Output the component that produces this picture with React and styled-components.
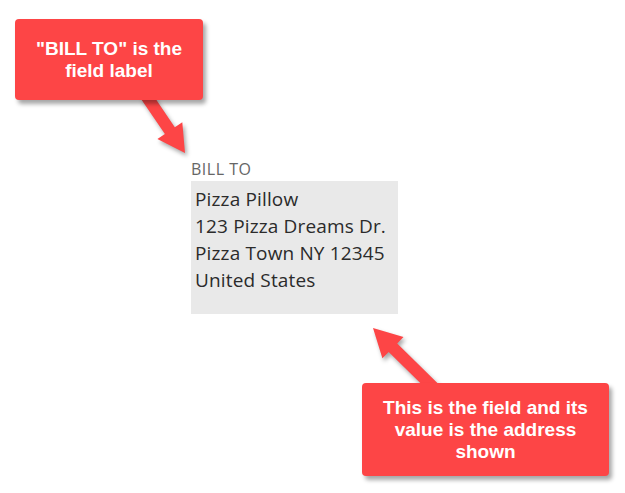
import React from "react";
import styled, { createGlobalStyle } from "styled-components";

const GlobalStyle = createGlobalStyle`
  html, body {
    margin: 0;
    padding: 0;
    background: #ffffff;
  }
`;

const RED = "#fd4546";

const Canvas = styled.div`
  position: relative;
  width: 625px;
  height: 493px;
  overflow: hidden;
  background: #ffffff;
  padding: 158px 0 0 191px;
  box-sizing: border-box;
`;

const Field = styled.div`
  display: flex;
  flex-direction: column;
  width: 207px;
  font-family: "Open Sans", "Liberation Sans", sans-serif;
`;

const FieldLabel = styled.div`
  font-size: 16px;
  line-height: 23px;
  color: #666666;
  letter-spacing: 0.5px;
`;

const FieldValue = styled.div`
  background: #e9e9e9;
  height: 133px;
  box-sizing: border-box;
  padding: 5px 4px;
  font-size: 19px;
  line-height: 27px;
  letter-spacing: 0.15px;
  color: #2b2b2b;
  white-space: pre-line;
`;

const Callout = styled.div`
  position: absolute;
  left: ${(p) => p.left}px;
  top: ${(p) => p.top}px;
  width: ${(p) => p.width}px;
  height: ${(p) => p.height}px;
  box-sizing: border-box;
  background: ${RED};
  border-radius: 4px;
  box-shadow: 3px 4px 4px rgba(0, 0, 0, 0.35);
  display: flex;
  align-items: center;
  justify-content: center;
  text-align: center;
  color: #ffffff;
  font-family: "Liberation Sans", Arial, sans-serif;
  font-weight: bold;
  font-size: 19px;
  line-height: 22px;
  padding: 0 10px;
  z-index: 2;
`;

const Arrows = styled.svg`
  position: absolute;
  left: 0;
  top: 0;
  width: 625px;
  height: 493px;
  z-index: 1;
  filter: drop-shadow(2px 3px 2px rgba(0, 0, 0, 0.35));
`;

// builds a block arrow polygon from a start point to a tip
const arrowPoints = (sx, sy, tx, ty, shaft = 6, head = 26, wing = 15) => {
  const len = Math.hypot(tx - sx, ty - sy);
  const dx = (tx - sx) / len;
  const dy = (ty - sy) / len;
  const nx = -dy;
  const ny = dx;
  const bx = tx - dx * head;
  const by = ty - dy * head;
  const pts = [
    [sx - nx * shaft, sy - ny * shaft],
    [bx - nx * shaft, by - ny * shaft],
    [bx - nx * wing, by - ny * wing],
    [tx, ty],
    [bx + nx * wing, by + ny * wing],
    [bx + nx * shaft, by + ny * shaft],
    [sx + nx * shaft, sy + ny * shaft],
  ];
  return pts.map((p) => p.map((v) => v.toFixed(1)).join(",")).join(" ");
};

const address = "Pizza Pillow\n123 Pizza Dreams Dr.\nPizza Town NY 12345\nUnited States";

const App = () => {
  return (
    <>
      <GlobalStyle />
      <Canvas>
        <Field>
          <FieldLabel>BILL TO</FieldLabel>
          <FieldValue>{address}</FieldValue>
        </Field>

        <Arrows viewBox="0 0 625 493">
          <polygon points={arrowPoints(145, 94, 185, 153, 6, 27, 15)} fill={RED} />
          <polygon points={arrowPoints(438, 392, 373, 328, 6, 28, 15)} fill={RED} />
        </Arrows>

        <Callout left={15} top={19} width={188} height={81}>
          "BILL TO" is the field label
        </Callout>
        <Callout left={362} top={383} width={247} height={93}>
          This is the field and its value is the address shown
        </Callout>
      </Canvas>
    </>
  );
};

export default App;
